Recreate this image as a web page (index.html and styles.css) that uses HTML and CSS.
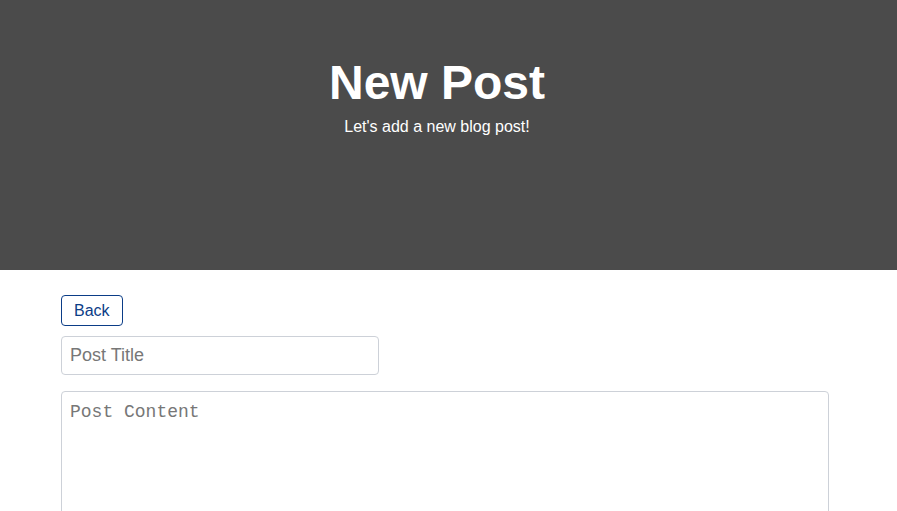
FILE: index.html
```html
<!DOCTYPE html>
<html lang="en">
<head>
<meta charset="utf-8">
<title>New Post</title>
<link rel="stylesheet" href="styles.css">
</head>
<body>
<header class="hero">
  <h1 class="hero-title">New Post</h1>
  <p class="hero-sub">Let's add a new blog post!</p>
</header>
<main class="content">
  <button class="back-btn" type="button">Back</button>
  <form class="post-form">
    <input class="title-input" type="text" placeholder="Post Title">
    <textarea class="content-input" placeholder="Post Content"></textarea>
  </form>
</main>
</body>
</html>
```
FILE: styles.css
```css
html, body {
  margin: 0;
  padding: 0;
  background: #ffffff;
  font-family: "Liberation Sans", Arial, sans-serif;
}

.hero {
  height: 270px;
  box-sizing: border-box;
  background: #4b4b4b;
  color: #ffffff;
  display: flex;
  flex-direction: column;
  align-items: center;
  padding: 55px 23px 0 0;
}

.hero-title {
  margin: 0;
  font-size: 48px;
  line-height: 56px;
  font-weight: 700;
}

.hero-sub {
  margin: 7px 0 0;
  font-size: 16px;
  line-height: 18px;
}

.content {
  padding: 25px 68px 0 61px;
  display: flex;
  flex-direction: column;
  align-items: flex-start;
}

.back-btn {
  font-family: "Liberation Sans", Arial, sans-serif;
  font-size: 16px;
  line-height: 19px;
  padding: 5px 12px;
  border: 1px solid #0b3d87;
  border-radius: 4px;
  background: #ffffff;
  color: #0b3d87;
  cursor: pointer;
}

.post-form {
  margin-top: 10px;
  display: flex;
  flex-direction: column;
  align-items: flex-start;
  width: 100%;
  gap: 16px;
}

.title-input {
  box-sizing: border-box;
  width: 318px;
  height: 39px;
  padding: 0 8px;
  font-family: "Liberation Sans", Arial, sans-serif;
  font-size: 18px;
  border: 1px solid #cdd1d8;
  border-radius: 4px;
  color: #333;
}

.title-input::placeholder {
  color: #777777;
}

.content-input {
  box-sizing: border-box;
  width: 768px;
  height: 200px;
  padding: 9px 8px 8px;
  font-family: "Liberation Mono", "Courier New", monospace;
  font-size: 18px;
  line-height: 22px;
  border: 1px solid #cdd1d8;
  border-radius: 4px;
  resize: vertical;
  color: #333;
}

.content-input::placeholder {
  color: #777777;
}
```
